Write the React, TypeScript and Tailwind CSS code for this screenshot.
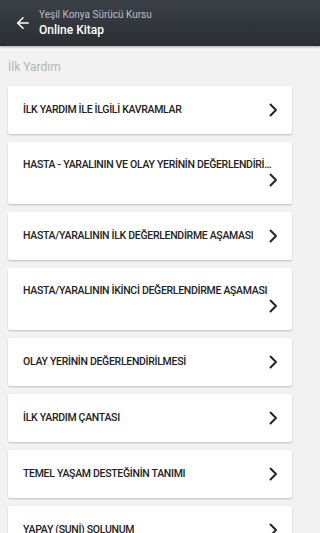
import { ArrowLeft } from 'lucide-react';

const topics = [
  { id: 1, title: 'İLK YARDIM İLE İLGİLİ KAVRAMLAR', tall: false },
  { id: 2, title: 'HASTA - YARALININ VE OLAY YERİNİN DEĞERLENDİRİLMESİ', tall: true },
  { id: 3, title: 'HASTA/YARALININ İLK DEĞERLENDİRME AŞAMASI', tall: false },
  { id: 4, title: 'HASTA/YARALININ İKİNCİ DEĞERLENDİRME AŞAMASI', tall: true },
  { id: 5, title: 'OLAY YERİNİN DEĞERLENDİRİLMESİ', tall: false },
  { id: 6, title: 'İLK YARDIM ÇANTASI', tall: false },
  { id: 7, title: 'TEMEL YAŞAM DESTEĞİNİN TANIMI', tall: false },
  { id: 8, title: 'YAPAY (SUNİ) SOLUNUM', tall: false },
];

const Chevron = ({ className = '' }: { className?: string }) => (
  <svg viewBox="0 0 10 14" className={`h-[14px] w-[10px] shrink-0 ${className}`} fill="none" stroke="#222" strokeWidth="1.9" strokeLinecap="round" strokeLinejoin="round">
    <path d="M2.5 1.5 L8 7 L2.5 12.5" />
  </svg>
);

const App = () => {
  return (
    <div className="h-[533px] w-full overflow-hidden bg-[#f2f2f2] font-['Roboto',sans-serif]">
      <header className="flex h-[46px] items-center bg-gradient-to-b from-[#3c4147] to-[#2a2e33] shadow-[0_1px_2px_rgba(0,0,0,0.3)]">
        <ArrowLeft className="ml-[14px] h-[18px] w-[18px] text-white" strokeWidth={2} />
        <div className="ml-[7px] flex flex-col leading-none">
          <span className="text-[10px] text-[#b9bec4]">Yeşil Konya Sürücü Kursu</span>
          <span className="mt-[4px] text-[12px] font-medium text-white">Online Kitap</span>
        </div>
      </header>

      <main className="w-[300px]">
        <h2 className="px-[8px] pt-[14px] pb-[12px] text-[12px] leading-[14px] text-[#b5b5b5]">İlk Yardım</h2>

        <div className="flex flex-col gap-[8px] px-[8px]">
          {topics.map((t) =>
            t.tall ? (
              <div key={t.id} className="flex h-[62px] flex-col rounded-[2px] bg-white pl-[15px] pr-[14px] shadow-[0_1px_2px_rgba(0,0,0,0.22)]">
                <p className="mt-[16px] truncate pr-[6px] text-[10.5px] font-medium leading-[14px] tracking-[-0.3px] text-[#222]">{t.title}</p>
                <Chevron className="mt-[1px] self-end" />
              </div>
            ) : (
              <div key={t.id} className="flex h-[48px] items-center justify-between gap-[6px] rounded-[2px] bg-white pl-[15px] pr-[14px] shadow-[0_1px_2px_rgba(0,0,0,0.22)]">
                <p className="truncate text-[10.5px] font-medium leading-[14px] tracking-[-0.3px] text-[#222]">{t.title}</p>
                <Chevron />
              </div>
            )
          )}
        </div>
      </main>
    </div>
  );
};

export default App;
